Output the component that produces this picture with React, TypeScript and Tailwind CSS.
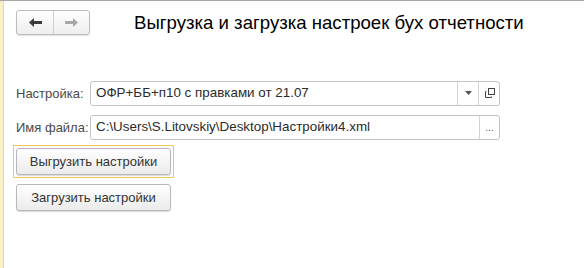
import React from 'react'

const FONT = { fontFamily: '"Liberation Sans", Arial, sans-serif' }

function NavButtons() {
  return (
    <div className="flex h-[25px] w-[74px] rounded-[3px] border border-[#bdbdbd] bg-gradient-to-b from-white to-[#eeeeee] shadow-[0_1px_1px_rgba(0,0,0,0.12)]">
      <div className="flex w-[37px] items-center justify-center border-r border-[#cfcfcf]">
        <svg width="13" height="9" viewBox="0 0 13 9">
          <path d="M0 4.5 L5 0 V3 H13 V6 H5 V9 Z" fill="#3a3a3a" />
        </svg>
      </div>
      <div className="flex flex-1 items-center justify-center">
        <svg width="13" height="9" viewBox="0 0 13 9">
          <path d="M13 4.5 L8 0 V3 H0 V6 H8 V9 Z" fill="#a8a8a8" />
        </svg>
      </div>
    </div>
  )
}

function Field({ value, children }: { value: string; children: React.ReactNode }) {
  return (
    <div className="flex h-[25px] w-[410px] rounded-[3px] border border-[#c4c4c4] bg-white">
      <div className="flex flex-1 items-center pl-[5px] text-[13.4px] text-[#2b2b2b]">{value}</div>
      {children}
    </div>
  )
}

function Btn({ label }: { label: string }) {
  return (
    <div className="flex h-[27px] w-[155px] items-center justify-center rounded-[3px] border border-[#b8b8b8] bg-gradient-to-b from-white to-[#ebebeb] text-[13px] text-[#333] shadow-[0_1px_1px_rgba(0,0,0,0.15)]">
      {label}
    </div>
  )
}

export default function App() {
  return (
    <div className="flex h-[268px] w-[584px] border-t border-[#a6a6a6] bg-white" style={FONT}>
      <div className="w-[3px] bg-[#fbf1c7]" />
      <div className="w-px bg-[#e6d99a]" />
      <div className="flex-1 pl-[12px]">
        <div className="flex items-center pt-[8px]">
          <NavButtons />
          <h1 className="ml-[44px] text-[18.6px] text-black">Выгрузка и загрузка настроек бух отчетности</h1>
        </div>

        <div className="mt-[44px] flex items-center">
          <span className="w-[74px] text-[13px] text-[#4a4a4a]">Настройка:</span>
          <Field value="ОФР+ББ+п10 с правками от 21.07">
            <div className="flex w-[21px] items-center justify-center border-l border-[#d4d4d4]">
              <svg width="7" height="4" viewBox="0 0 7 4">
                <path d="M0 0 H7 L3.5 4 Z" fill="#555" />
              </svg>
            </div>
            <div className="flex w-[21px] items-center justify-center border-l border-[#d4d4d4]">
              <svg width="11" height="11" viewBox="0 0 11 11" fill="none" stroke="#444" strokeWidth="1">
                <rect x="4.5" y="0.5" width="6" height="6" />
                <path d="M2.5 3.5 H1.5 V9.5 H7.5 V8.5" />
              </svg>
            </div>
          </Field>
        </div>

        <div className="mt-[9px] flex items-center">
          <span className="w-[74px] text-[13px] text-[#4a4a4a]">Имя файла:</span>
          <Field value="C:\Users\S.Litovskiy\Desktop\Настройки4.xml">
            <div className="flex w-[20px] items-end justify-center border-l border-[#d4d4d4] pb-[6px] text-[10px] leading-none text-[#555]">
              ...
            </div>
          </Field>
        </div>

        {/* focused button: yellow frame */}
        <div className="ml-[-3px] mt-[5px] w-fit bg-[#eecb4c] p-px">
          <div className="bg-white p-[2px]">
            <Btn label="Выгрузить настройки" />
          </div>
        </div>
        <div className="mt-[6px]">
          <Btn label="Загрузить настройки" />
        </div>
      </div>
    </div>
  )
}
